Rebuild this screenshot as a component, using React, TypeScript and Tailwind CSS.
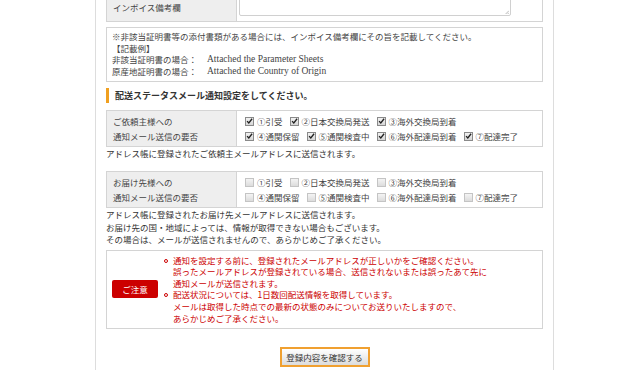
const font = { fontFamily: '"Noto Sans CJK JP", "Noto Sans", sans-serif' };

function Box({ checked }: { checked: boolean }) {
  return (
    <span
      className={`inline-flex w-[9px] h-[9px] mr-[3px] items-center justify-center border ${
        checked ? 'border-[#8a8a8a] bg-gradient-to-b from-[#f2f2f2] to-[#d6d6d6]' : 'border-[#c4c4c4] bg-gradient-to-b from-[#f4f4f4] to-[#dcdcdc]'
      }`}
    >
      {checked && (
        <svg viewBox="0 0 10 10" className="w-[8px] h-[8px]">
          <path d="M1.5 5.2 L4 7.8 L8.7 1.8" fill="none" stroke="#222" strokeWidth="1.9" />
        </svg>
      )}
    </span>
  );
}

function Item({ label, checked }: { label: string; checked: boolean }) {
  return (
    <span className="inline-flex items-center mr-[7px]">
      <Box checked={checked} />
      <span>{label}</span>
    </span>
  );
}

function NotifyTable({ title, checked }: { title: string; checked: boolean }) {
  return (
    <div className="flex border border-[#d4d4d4] h-[37px]">
      <div className="w-[130px] bg-[#eeeeee] border-r border-[#d4d4d4] pl-[6px] flex flex-col justify-center leading-[15px] text-[#444]">
        <div>{title}</div>
        <div>通知メール送信の要否</div>
      </div>
      <div className="flex-1 pl-[8px] flex flex-col justify-center leading-[15px] text-[#444]">
        <div className="flex">
          <Item label="①引受" checked={checked} />
          <Item label="②日本交換局発送" checked={checked} />
          <Item label="③海外交換局到着" checked={checked} />
        </div>
        <div className="flex">
          <Item label="④通関保留" checked={checked} />
          <Item label="⑤通関検査中" checked={checked} />
          <Item label="⑥海外配達局到着" checked={checked} />
          <Item label="⑦配達完了" checked={checked} />
        </div>
      </div>
    </div>
  );
}

function Bullet() {
  return (
    <span className="w-[9px] flex items-center">
      <span className="w-[4px] h-[4px] rounded-full border border-[#cc0000]" />
    </span>
  );
}

function App() {
  return (
    <div className="w-[640px] h-[377px] bg-white overflow-hidden text-[8.5px] text-[#333]" style={font}>
      <div className="ml-[95px] w-[459px] h-full border-x border-[#dddddd] px-[10px]">
        <div className="mt-[-7px]">
          {/* Invoice remarks row */}
          <div className="flex border border-[#d4d4d4] h-[29px]">
            <div className="w-[130px] bg-[#eeeeee] border-r border-[#d4d4d4] pl-[6px] flex items-center text-[#444]">
              インボイス備考欄
            </div>
            <div className="flex-1 pl-[2px]">
              <div className="relative w-[272px] h-[22px] border border-[#d0d0d0] rounded-b-[2px]">
                <svg viewBox="0 0 6 6" className="absolute right-[1px] bottom-[1px] w-[4px] h-[4px]">
                  <path d="M6 1 L1 6 M6 4 L4 6" stroke="#999" strokeWidth="1" />
                </svg>
              </div>
            </div>
          </div>

          {/* Note box */}
          <div className="mt-[5px] border border-[#d4d4d4] pl-[5px] pt-[3px] pb-[4px] leading-[11.6px] text-[#444]">
            <div>※非該当証明書等の添付書類がある場合には、インボイス備考欄にその旨を記載してください。</div>
            <div>【記載例】</div>
            <div className="flex">
              <span className="w-[95px]">非該当証明書の場合：</span>
              <span className="text-[9.5px]" style={{ fontFamily: '"Liberation Serif", serif' }}>Attached the Parameter Sheets</span>
            </div>
            <div className="flex">
              <span className="w-[95px]">原産地証明書の場合：</span>
              <span className="text-[9.5px]" style={{ fontFamily: '"Liberation Serif", serif' }}>Attached the Country of Origin</span>
            </div>
          </div>

          {/* Heading */}
          <div className="mt-[6px] flex items-center h-[15px]">
            <span className="w-[3px] h-[15px] bg-[#f0a020]" />
            <span className="ml-[6px] text-[9px] font-bold text-[#333]">配送ステータスメール通知設定をしてください。</span>
          </div>

          <div className="mt-[7px]">
            <NotifyTable title="ご依頼主様への" checked={true} />
          </div>
          <div className="leading-[12px]">アドレス帳に登録されたご依頼主メールアドレスに送信されます。</div>

          <div className="mt-[12px]">
            <NotifyTable title="お届け先様への" checked={false} />
          </div>
          <div className="leading-[12.2px]">
            <div>アドレス帳に登録されたお届け先メールアドレスに送信されます。</div>
            <div>お届け先の国・地域によっては、情報が取得できない場合もございます。</div>
            <div>その場合は、メールが送信されませんので、あらかじめご了承ください。</div>
          </div>

          {/* Caution box */}
          <div className="mt-[5px] h-[79px] border border-[#d4d4d4] flex items-center pl-[5px]">
            <span className="w-[46px] h-[18px] bg-[#cc0000] rounded-[2px] text-white flex items-center justify-center">
              ご注意
            </span>
            <div className="ml-[6px] leading-[11.6px] text-[#cc0000]">
              <div className="flex">
                <Bullet />
                <span>通知を設定する前に、登録されたメールアドレスが正しいかをご確認ください。</span>
              </div>
              <div className="pl-[9px]">誤ったメールアドレスが登録されている場合、送信されないまたは誤ったあて先に</div>
              <div className="pl-[9px]">通知メールが送信されます。</div>
              <div className="flex">
                <Bullet />
                <span>配送状況については、1日数回配送情報を取得しています。</span>
              </div>
              <div className="pl-[9px]">メールは取得した時点での最新の状態のみについてお送りいたしますので、</div>
              <div className="pl-[9px]">あらかじめご了承ください。</div>
            </div>
          </div>

          {/* Submit */}
          <div className="mt-[18px] flex justify-center">
            <button className="w-[90px] h-[20px] border-2 border-[#f0a030] bg-gradient-to-b from-[#ffffff] to-[#dcdcdc] text-[#333] text-[8.5px]">
              登録内容を確認する
            </button>
          </div>
        </div>
      </div>
    </div>
  );
}

export default App;
